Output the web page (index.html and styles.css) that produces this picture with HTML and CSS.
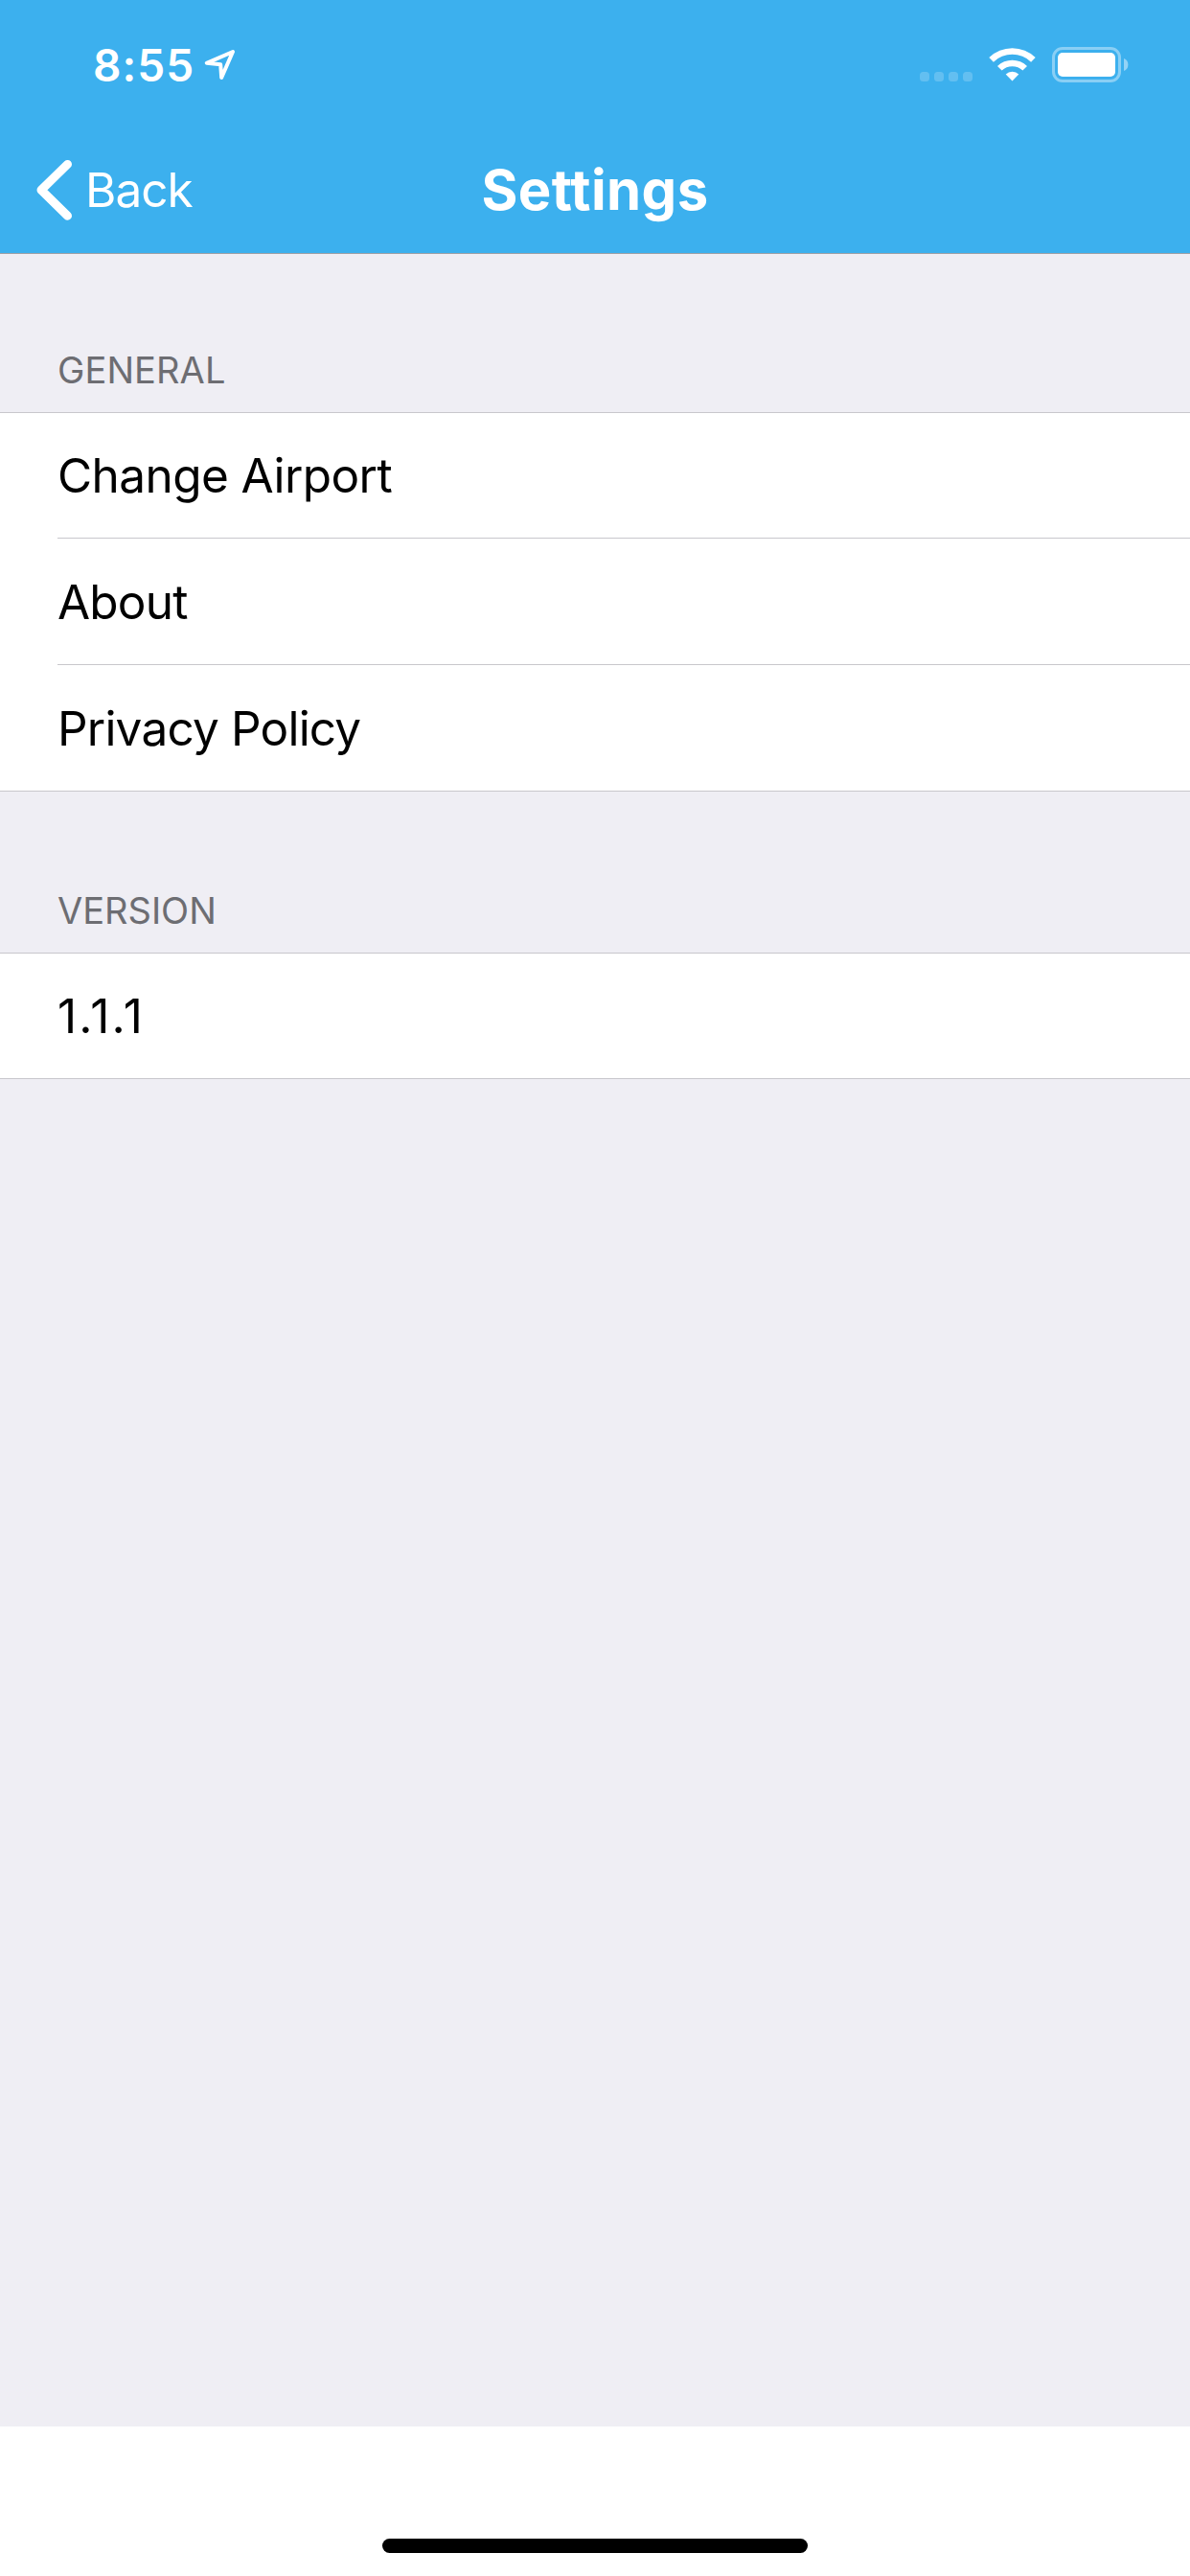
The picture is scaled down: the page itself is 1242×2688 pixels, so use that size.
FILE: index.html
```html
<!DOCTYPE html>
<html lang="en">
<head>
<meta charset="utf-8">
<title>Settings</title>
<link rel="stylesheet" href="styles.css">
</head>
<body>
<div class="screen">
  <header class="header">
    <div class="status-bar">
      <div class="status-left">
        <span class="time">8:55</span>
        <svg class="location" width="34" height="36" viewBox="0 0 34 36"><path d="M2.7 15.8 30 4 18.2 31 17.2 17.3Z"/></svg>
      </div>
      <div class="status-right">
        <div class="dots"><i></i><i></i><i></i><i></i></div>
        <svg class="wifi" width="50" height="36" viewBox="0 0 50 36">
          <path d="M0.3 11.1a34.8 34.8 0 0 1 48.4 0l-4.6 4.6a28.3 28.3 0 0 0-39.2 0z"/>
          <path d="M9 19.9a22.3 22.3 0 0 1 31 0l-4.6 4.6a15.9 15.9 0 0 0-21.8 0z"/>
          <path d="M17.7 28.6a9.8 9.8 0 0 1 13.6 0l-6.8 6.8z"/>
        </svg>
        <svg class="battery" width="81" height="37" viewBox="0 0 81 37">
          <rect class="battery-case" x="1.5" y="1.5" width="69" height="34" rx="9.5"/>
          <rect x="6" y="6" width="60" height="25" rx="5"/>
          <path class="battery-tip" d="M75 12a7 7 0 0 1 0 13z"/>
        </svg>
      </div>
    </div>
    <nav class="nav-bar">
      <a class="back"><svg width="38" height="64" viewBox="0 0 38 64"><path d="M32.5 5.4 5 32.3 32.5 59.2"/></svg><span class="back-label">Back</span></a>
      <h1 class="title">Settings</h1>
    </nav>
  </header>
  <main class="content">
    <h2 class="section-title general">GENERAL</h2>
    <ul class="group">
      <li class="row"><span class="airport">Change Airport</span></li>
      <li class="row"><span class="about">About</span></li>
      <li class="row"><span class="policy">Privacy Policy</span></li>
    </ul>
    <h2 class="section-title version">VERSION</h2>
    <ul class="group">
      <li class="row"><span class="number">1.1.1</span></li>
    </ul>
  </main>
  <footer class="home"><div class="home-bar"></div></footer>
</div>
</body>
</html>
```
FILE: styles.css
```css
* { box-sizing: border-box; margin: 0; padding: 0; }
body { font-family: Inter, "Liberation Sans", sans-serif; background: #fff; }
.screen { width: 1242px; height: 2688px; display: flex; flex-direction: column; }
.header { height: 265px; background: #3cb0ee; color: #fff; border-bottom: 1px solid #9c9fa6; }
.status-bar { height: 132px; display: flex; justify-content: space-between; padding: 0 63px 0 97px; }
.status-left, .status-right { display: flex; align-items: flex-start; }
.time { width: 106px; font-size: 46px; font-weight: 600; line-height: 136px; letter-spacing: 1.1px; }
.location { margin: 50px 0 0 10px; fill: none; stroke: #fff; stroke-width: 4; stroke-linejoin: round; }
.dots { display: flex; gap: 5px; margin: 75px 17px 0 0; }
.dots i { width: 10px; height: 10px; border-radius: 3.5px; background: rgba(255,255,255,.2); }
.wifi { fill: #fff; margin: 49px 16px 0 0; }
.battery { fill: #fff; margin-top: 49px; }
.battery-case { fill: none; stroke: #fff; stroke-width: 3; opacity: .4; }
.battery-tip { opacity: .45; }
.nav-bar { height: 132px; display: grid; grid-template-columns: 1fr auto 1fr; align-items: center; }
.back { display: flex; align-items: center; padding-left: 38px; }
.back svg { fill: none; stroke: #fff; stroke-width: 9; stroke-linecap: round; stroke-linejoin: round; }
.back-label { font-size: 49.5px; line-height: 60px; letter-spacing: -1px; margin-left: 13px; }
.title { font-size: 58px; font-weight: 700; line-height: 70px; letter-spacing: .4px; }
.content { flex: 1; background: #efeef4; }
.section-title { padding-left: 60px; font-size: 38px; font-weight: 400; line-height: 46px; color: #6d6d72; }
.general { padding-top: 98px; height: 165px; letter-spacing: .1px; }
.version { padding-top: 101px; height: 168px; }
.group { list-style: none; background: #fff; border: solid #c8c7cc; border-width: 1px 0; }
.row { height: 132px; padding-left: 60px; }
.row:first-child { height: 131px; }
.row:last-child { height: 131px; }
.row:only-child { height: 130px; }
.row span { display: block; height: 100%; line-height: 130px; font-size: 49.5px; color: #000; border-bottom: 1px solid #c8c7cc; }
.row + .row span { line-height: 132px; }
.row:last-child span { border-bottom: 0; }
.row .airport { letter-spacing: -.57px; }
.row .about { letter-spacing: -.8px; }
.row .policy { letter-spacing: -.8px; }
.row .number { letter-spacing: 2.1px; }
.home { height: 156px; padding-top: 117px; }
.home-bar { width: 444px; height: 15px; margin: 0 auto; border-radius: 8px; background: #000; }
```
